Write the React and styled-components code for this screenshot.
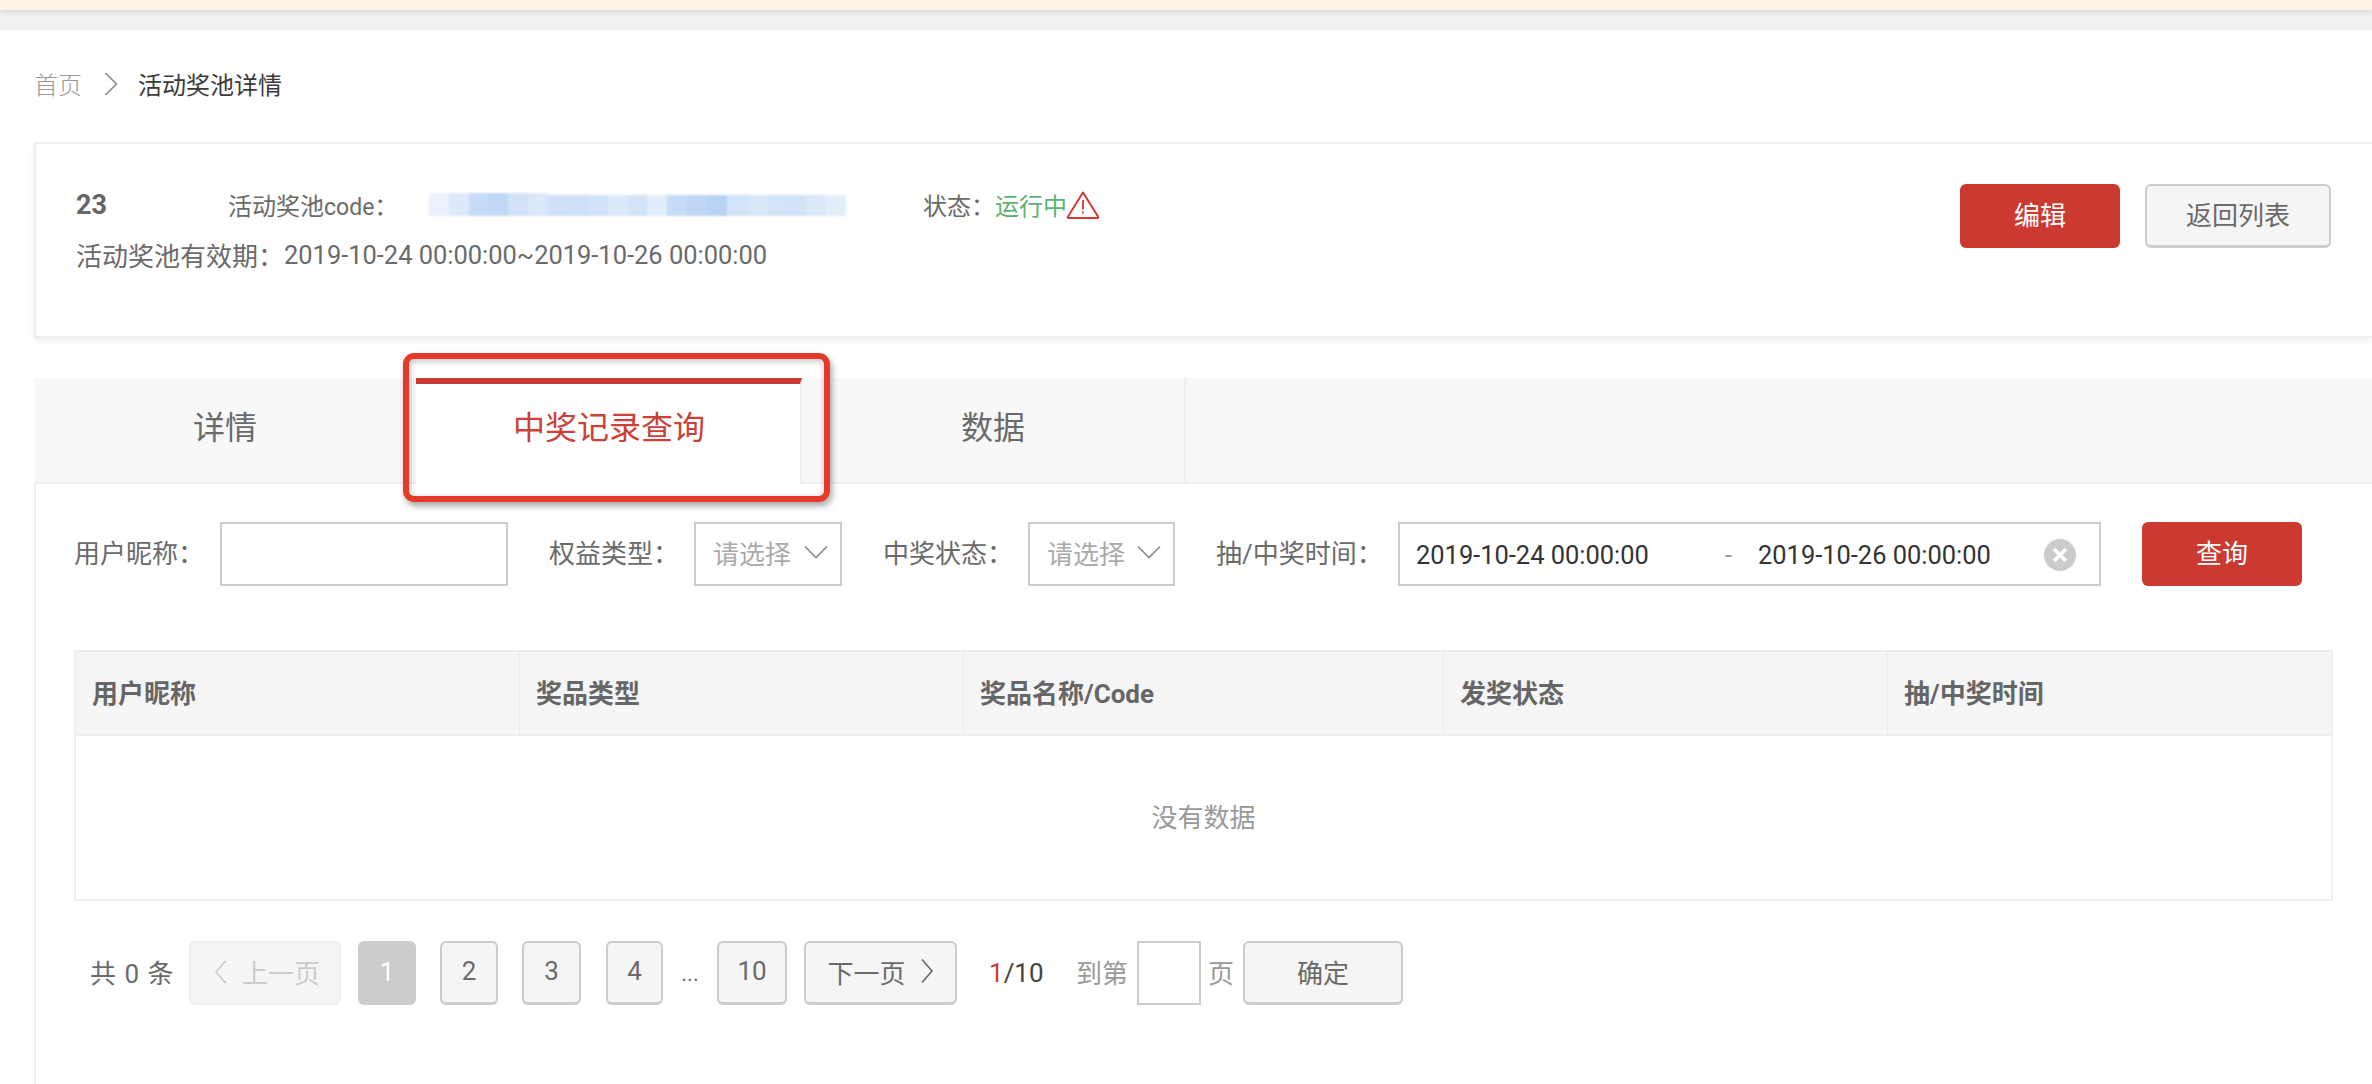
import React from 'react';
import styled, { createGlobalStyle } from 'styled-components';

const Global = createGlobalStyle`
  html, body { margin: 0; padding: 0; background: #fff; overflow: hidden; }
  body { font-family: Roboto, "Noto Sans CJK SC", sans-serif; color: #666; }
  * { box-sizing: border-box; }
`;

const Page = styled.div`
  width: 2372px;
  height: 1084px;
  display: flex;
  flex-direction: column;
  overflow: hidden;
  position: relative;
`;
const Notice = styled.div`
  height: 10px;
  flex: none;
  background: #fdf3e3;
  position: relative;
  box-shadow: 0 2px 6px rgba(0, 0, 0, 0.1);
`;
const GrayBand = styled.div`
  height: 20px;
  flex: none;
  background: #f0f0f0;
`;
const Main = styled.main`
  flex: 1;
  padding: 0 0 0 34px;
  background: #fff;
  display: flex;
  flex-direction: column;
`;
const Crumbs = styled.nav`
  height: 112px;
  flex: none;
  display: flex;
  align-items: center;
  font-size: 24px;
  padding-bottom: 5px;
`;
const CrumbLink = styled.span`
  color: #999;
  font-weight: 300;
`;
const CrumbCurrent = styled.span`
  color: #3a3a3a;
`;
const CrumbSep = styled.svg`
  width: 14px;
  height: 24px;
  margin: 0 20px 0 22px;
`;
const InfoCard = styled.section`
  height: 196px;
  flex: none;
  border: 2px solid #eee;
  border-right: 0;
  box-shadow: 0 3px 6px rgba(0, 0, 0, 0.06);
  padding: 40px 41px 0 40px;
  display: flex;
  justify-content: space-between;
  align-items: flex-start;
  background: #fff;
`;
const InfoText = styled.div`
  display: flex;
  flex-direction: column;
  gap: 13px;
  padding-top: 2px;
`;
const InfoRow = styled.div`
  display: flex;
  align-items: center;
  height: 37px;
  font-size: ${p => p.$size || 24}px;
  color: #6a6a6a;
`;
const PoolId = styled.strong`
  width: 152px;
  font-size: 27px;
  font-weight: 700;
  color: #666;
`;
const CodeLabel = styled.span`
  width: 201px;
  flex: none;
  white-space: nowrap;
`;
const CodeWord = styled.span`
  font-size: 23px;
`;
const BlurStrip = styled.div`
  width: 417px;
  height: 23px;
  flex: none;
  display: flex;
  align-items: flex-end;
  margin-right: 77px;
  filter: blur(0.8px);
`;
const BlurCell = styled.i`
  display: block;
  flex: 1;
  height: ${p => p.$h}px;
  background: ${p => p.$c};
`;
const StatusLabel = styled.span`
  width: 72px;
  flex: none;
  white-space: nowrap;
`;
const StatusValue = styled.span`
  color: #5cb26e;
  white-space: nowrap;
`;
const WarnIcon = styled.svg`
  width: 34px;
  height: 28px;
  margin-left: -1px;
`;
const DateText = styled.span`
  font-size: 25.45px;
  white-space: nowrap;
`;
const Actions = styled.div`
  display: flex;
  gap: 25px;
`;
const Button = styled.button`
  height: 64px;
  width: ${p => p.$w}px;
  border-radius: 6px;
  font: 26px Roboto, "Noto Sans CJK SC", sans-serif;
  padding: 0 0 5px;
  ${p => p.$primary
    ? 'background: #cc3931; color: #fff; border: 0;'
    : 'background: #f5f5f5; color: #6a6a6a; border: 2px solid #ccc; border-bottom-width: 3px;'}
`;
const Tabs = styled.div`
  margin-top: 40px;
  height: 106px;
  flex: none;
  display: flex;
  background: #f8f8f8;
  border-bottom: 2px solid #eee;
`;
const Tab = styled.div`
  width: ${p => p.$w}px;
  height: ${p => (p.$active ? 106 : 104)}px;
  flex: none;
  font-size: 32px;
  display: flex;
  align-items: center;
  justify-content: center;
  padding-bottom: ${p => (p.$active ? 19 : 11)}px;
  padding-left: ${p => (p.$active ? 2 : 0)}px;
  color: ${p => (p.$active ? '#cc4038' : '#6a6a6a')};
  background: ${p => (p.$active ? '#fff' : 'transparent')};
  border-top: ${p => (p.$active ? '6px solid #c93a32' : '0')};
  border-right: ${p => (p.$last || p.$active ? '2px solid #eee' : '0')};
`;
const Panel = styled.div`
  flex: 1;
  border-left: 2px solid #eee;
  padding: 38px 39px 0 38px;
`;
const Filters = styled.div`
  display: flex;
  gap: 41px;
  height: 64px;
`;
const Field = styled.div`
  display: flex;
  align-items: center;
`;
const FieldLabel = styled.span`
  width: ${p => p.$w}px;
  font-size: 26px;
  color: #6a6a6a;
  padding-bottom: 6px;
`;
const TextBox = styled.div`
  width: ${p => p.$w}px;
  height: 64px;
  border: 2px solid #ccc;
  background: #fff;
`;
const SelectBox = styled.div`
  width: ${p => p.$w}px;
  height: 64px;
  border: 2px solid #ccc;
  display: flex;
  align-items: center;
  justify-content: space-between;
  padding: 0 12px 4px 17px;
  color: #aaa;
  font-size: 26px;
`;
const Chevron = styled.svg`
  width: 24px;
  height: 14px;
`;
const RangeBox = styled.div`
  width: 703px;
  height: 64px;
  border: 2px solid #ccc;
  display: flex;
  align-items: center;
  padding: 2px 0 0 16px;
  font-size: 25.45px;
  color: #333;
`;
const RangeValue = styled.span`
  width: ${p => p.$w}px;
  flex: none;
  white-space: nowrap;
`;
const RangeDash = styled.span`
  width: 33px;
  flex: none;
  color: #999;
`;
const ClearIcon = styled.svg`
  width: 32px;
  height: 32px;
  flex: none;
  margin-left: 54px;
`;
const Table = styled.div`
  margin-top: 64px;
  width: 2259px;
  border: 2px solid #eee;
  border-top: 0;
`;
const HeadRow = styled.div`
  display: flex;
  height: 86px;
  background: #f5f5f5;
  border-top: 2px solid #eee;
  border-bottom: 2px solid #eee;
  margin: 0 -2px;
  border-left: 2px solid #eee;
  border-right: 2px solid #eee;
`;
const HeadCell = styled.div`
  width: ${p => p.$w}px;
  flex: ${p => (p.$grow ? 1 : 'none')};
  display: flex;
  align-items: center;
  padding: 0 0 3px 16px;
  font-size: 26px;
  font-weight: 700;
  color: #666;
  border-right: ${p => (p.$grow ? '0' : '1px solid #eaeaea')};
`;
const Empty = styled.div`
  height: 163px;
  display: flex;
  align-items: center;
  justify-content: center;
  font-size: 26px;
  color: #999;
  padding-bottom: 4px;
`;
const Pager = styled.div`
  margin-top: 40px;
  height: 64px;
  display: flex;
  align-items: center;
  margin-left: 16px;
  font-size: 26px;
`;
const Total = styled.span`
  width: 99px;
  color: #6a6a6a;
  word-spacing: 2px;
  padding-bottom: 3px;
`;
const PageBtn = styled.div`
  width: ${p => p.$w}px;
  margin-left: ${p => p.$ml}px;
  height: 64px;
  flex: none;
  border-radius: 6px;
  display: flex;
  align-items: center;
  justify-content: center;
  gap: 14px;
  padding: 0 0 3px ${p => p.$pl || 0}px;
  ${p => {
    if (p.$variant === 'current') return 'background: #ccc; color: #fff;';
    if (p.$variant === 'off') return 'background: #f5f5f5; color: #ccc; border: 2px solid #eee;';
    return 'background: #f5f5f5; color: #6a6a6a; border: 2px solid #ccc; border-bottom-width: 3px;';
  }}
`;
const Ellipsis = styled.span`
  width: 54px;
  text-align: center;
  color: #666;
  font-size: 22px;
`;
const PageChevron = styled.svg`
  width: 14px;
  height: 26px;
`;
const Ratio = styled.span`
  margin-left: 32px;
  width: 87px;
  color: #444;
  padding-bottom: 1px;
`;
const RatioNow = styled.b`
  font-weight: 400;
  color: #d23a30;
`;
const GoLabel = styled.span`
  color: #999;
  padding-bottom: 3px;
  margin-left: ${p => p.$ml || 0}px;
`;
const GoInput = styled.div`
  width: 64px;
  height: 64px;
  margin: 0 7px 0 9px;
  border: 2px solid #ccc;
  background: #fff;
`;
/* Review annotation laid over the screenshot */
const Callout = styled.div`
  position: absolute;
  left: 403px;
  top: 353px;
  width: 427px;
  height: 149px;
  border: 6px solid #e53a2a;
  border-radius: 11px;
  box-shadow: 2px 4px 6px rgba(0, 0, 0, 0.35), inset 1px 2px 6px rgba(0, 0, 0, 0.25);
  pointer-events: none;
`;

const blur = [
  ['#eaf2fc', 23], ['#dce9fa', 23], ['#c5dbf6', 23], ['#c0d8f5', 23], ['#d2e3f8', 23], ['#dae8fa', 23],
  ['#cfe1f7', 21], ['#cee0f7', 21], ['#d2e3f8', 21], ['#dce9fa', 21], ['#d3e4f8', 21], ['#e2edfb', 21],
  ['#c5dbf6', 21], ['#bfd7f5', 21], ['#b7d2f3', 21], ['#d3e4f8', 21], ['#d8e6f9', 21], ['#d4e4f8', 21],
  ['#d2e3f8', 21], ['#dae8fa', 21], ['#e3eefb', 21],
];

const chevronDown = <path d="M1 1.5 L12 12.5 L23 1.5" fill="none" stroke="#888" strokeWidth="1.6" />;

export default function App() {
  return (
    <Page>
      <Global />
      <Notice />
      <GrayBand />
      <Main>
        <Crumbs>
          <CrumbLink>首页</CrumbLink>
          <CrumbSep viewBox="0 0 14 24">
            <path d="M1.5 1 L12.5 12 L1.5 23" fill="none" stroke="#888" strokeWidth="1.6" />
          </CrumbSep>
          <CrumbCurrent>活动奖池详情</CrumbCurrent>
        </Crumbs>
        <InfoCard>
          <InfoText>
            <InfoRow>
              <PoolId>23</PoolId>
              <CodeLabel>活动奖池<CodeWord>code</CodeWord>：</CodeLabel>
              <BlurStrip>
                {blur.map(([c, h], i) => <BlurCell key={i} $c={c} $h={h} />)}
              </BlurStrip>
              <StatusLabel>状态：</StatusLabel>
              <StatusValue>运行中</StatusValue>
              <WarnIcon viewBox="0 0 34 28">
                <path d="M17 1.5 L32 25.5 Q33 27 31 27 H3 Q1 27 2 25.5 Z" fill="none" stroke="#cf3a30" strokeWidth="2" strokeLinejoin="round" />
                <path d="M17 9 V18.5 M17 20.5 V22.5" stroke="#cf3a30" strokeWidth="1.8" />
              </WarnIcon>
            </InfoRow>
            <InfoRow $size={26}>活动奖池有效期：<DateText>2019-10-24 00:00:00~2019-10-26 00:00:00</DateText></InfoRow>
          </InfoText>
          <Actions>
            <Button $primary $w={160}>编辑</Button>
            <Button $w={186}>返回列表</Button>
          </Actions>
        </InfoCard>
        <Tabs>
          <Tab $w={382}>详情</Tab>
          <Tab $w={386} $active>中奖记录查询</Tab>
          <Tab $w={384} $last>数据</Tab>
        </Tabs>
        <Panel>
          <Filters>
            <Field>
              <FieldLabel $w={146}>用户昵称：</FieldLabel>
              <TextBox $w={288} />
            </Field>
            <Field>
              <FieldLabel $w={145}>权益类型：</FieldLabel>
              <SelectBox $w={148}>请选择<Chevron viewBox="0 0 24 14">{chevronDown}</Chevron></SelectBox>
            </Field>
            <Field>
              <FieldLabel $w={145}>中奖状态：</FieldLabel>
              <SelectBox $w={147}>请选择<Chevron viewBox="0 0 24 14">{chevronDown}</Chevron></SelectBox>
            </Field>
            <Field>
              <FieldLabel $w={182}>抽/中奖时间：</FieldLabel>
              <RangeBox>
                <RangeValue $w={309}>2019-10-24 00:00:00</RangeValue>
                <RangeDash>-</RangeDash>
                <RangeValue $w={232}>2019-10-26 00:00:00</RangeValue>
                <ClearIcon viewBox="0 0 32 32">
                  <circle cx="16" cy="16" r="16" fill="#ccc" />
                  <path d="M10 10 L22 22 M22 10 L10 22" stroke="#fff" strokeWidth="3.6" />
                </ClearIcon>
              </RangeBox>
            </Field>
            <Button $primary $w={160}>查询</Button>
          </Filters>
          <Table>
            <HeadRow>
              <HeadCell $w={444}>用户昵称</HeadCell>
              <HeadCell $w={444}>奖品类型</HeadCell>
              <HeadCell $w={480}>奖品名称/Code</HeadCell>
              <HeadCell $w={444}>发奖状态</HeadCell>
              <HeadCell $grow>抽/中奖时间</HeadCell>
            </HeadRow>
            <Empty>没有数据</Empty>
          </Table>
          <Pager>
            <Total>共 0 条</Total>
            <PageBtn $w={152} $pl={4} $variant="off">
              <PageChevron viewBox="0 0 14 26"><path d="M12 1.5 L2 13 L12 24.5" fill="none" stroke="#ccc" strokeWidth="1.6" /></PageChevron>
              上一页
            </PageBtn>
            <PageBtn $w={58} $ml={17} $variant="current">1</PageBtn>
            <PageBtn $w={58} $ml={24}>2</PageBtn>
            <PageBtn $w={59} $ml={24}>3</PageBtn>
            <PageBtn $w={57} $ml={25}>4</PageBtn>
            <Ellipsis>...</Ellipsis>
            <PageBtn $w={70}>10</PageBtn>
            <PageBtn $w={153} $ml={17}>
              下一页
              <PageChevron viewBox="0 0 14 26"><path d="M2 1.5 L12 13 L2 24.5" fill="none" stroke="#666" strokeWidth="1.6" /></PageChevron>
            </PageBtn>
            <Ratio><RatioNow>1</RatioNow>/10</Ratio>
            <GoLabel>到第</GoLabel>
            <GoInput />
            <GoLabel>页</GoLabel>
            <PageBtn $w={160} $ml={9}>确定</PageBtn>
          </Pager>
        </Panel>
      </Main>
      <Callout />
    </Page>
  );
}
